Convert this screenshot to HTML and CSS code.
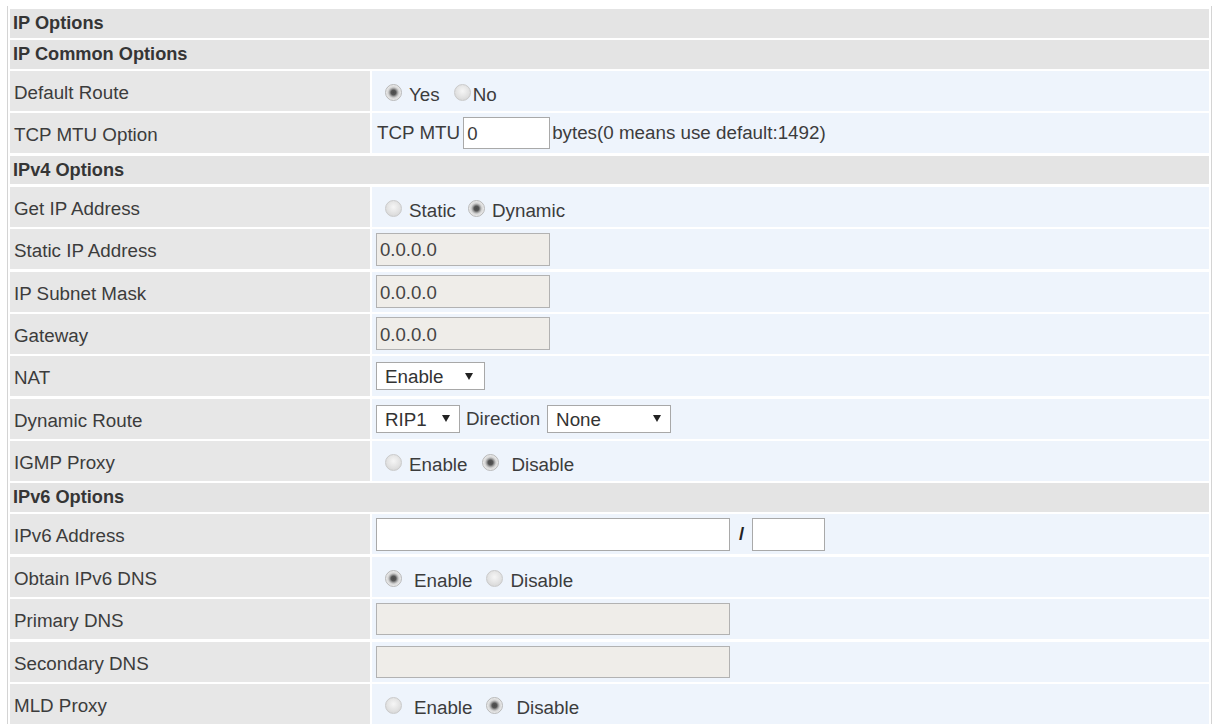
FILE: index.html
```html
<!DOCTYPE html>
<html>
<head>
<meta charset="utf-8">
<title>IP Options</title>
<link rel="stylesheet" href="styles.css">
</head>
<body>
<div class="panel">
  <div class="hdr">IP Options</div>
  <div class="hdr">IP Common Options</div>
  <div class="row">
    <div class="lbl">Default Route</div>
    <div class="val radios">
      <input type="radio" class="rd first" name="dr" checked><span class="t">Yes</span>
      <input type="radio" class="rd second" name="dr"><span class="t tight">No</span>
    </div>
  </div>
  <div class="row">
    <div class="lbl">TCP MTU Option</div>
    <div class="val">
      <span class="txt">TCP MTU</span><input type="text" class="inp mtu" value="0"><span class="txt after">bytes(0 means use default:1492)</span>
    </div>
  </div>
  <div class="hdr">IPv4 Options</div>
  <div class="row">
    <div class="lbl">Get IP Address</div>
    <div class="val radios">
      <input type="radio" class="rd first" name="gip"><span class="t">Static</span>
      <input type="radio" class="rd second narrow" name="gip" checked><span class="t">Dynamic</span>
    </div>
  </div>
  <div class="row">
    <div class="lbl">Static IP Address</div>
    <div class="val"><input type="text" class="inp dis ip" value="0.0.0.0" disabled></div>
  </div>
  <div class="row">
    <div class="lbl">IP Subnet Mask</div>
    <div class="val"><input type="text" class="inp dis ip" value="0.0.0.0" disabled></div>
  </div>
  <div class="row">
    <div class="lbl">Gateway</div>
    <div class="val"><input type="text" class="inp dis ip" value="0.0.0.0" disabled></div>
  </div>
  <div class="row">
    <div class="lbl">NAT</div>
    <div class="val">
      <span class="sel nat"><span>Enable</span><svg class="arr" viewBox="0 0 8 7"><polygon points="0,0 8,0 4,7"/></svg></span>
    </div>
  </div>
  <div class="row">
    <div class="lbl">Dynamic Route</div>
    <div class="val">
      <span class="sel rip"><span>RIP1</span><svg class="arr" viewBox="0 0 8 7"><polygon points="0,0 8,0 4,7"/></svg></span><span class="txt dir">Direction</span><span class="sel none"><span>None</span><svg class="arr" viewBox="0 0 8 7"><polygon points="0,0 8,0 4,7"/></svg></span>
    </div>
  </div>
  <div class="row">
    <div class="lbl">IGMP Proxy</div>
    <div class="val radios">
      <input type="radio" class="rd first" name="igmp"><span class="t">Enable</span>
      <input type="radio" class="rd second wide2" name="igmp" checked><span class="t wide">Disable</span>
    </div>
  </div>
  <div class="hdr">IPv6 Options</div>
  <div class="row">
    <div class="lbl">IPv6 Address</div>
    <div class="val">
      <input type="text" class="inp v6"><span class="slash">/</span><input type="text" class="inp pre">
    </div>
  </div>
  <div class="row">
    <div class="lbl">Obtain IPv6 DNS</div>
    <div class="val radios">
      <input type="radio" class="rd first" name="odns" checked><span class="t wide">Enable</span>
      <input type="radio" class="rd second" name="odns"><span class="t">Disable</span>
    </div>
  </div>
  <div class="row">
    <div class="lbl">Primary DNS</div>
    <div class="val"><input type="text" class="inp dis v6 short" disabled></div>
  </div>
  <div class="row">
    <div class="lbl">Secondary DNS</div>
    <div class="val"><input type="text" class="inp dis v6 short" disabled></div>
  </div>
  <div class="row">
    <div class="lbl">MLD Proxy</div>
    <div class="val radios">
      <input type="radio" class="rd first" name="mld"><span class="t wide">Enable</span>
      <input type="radio" class="rd second" name="mld" checked><span class="t wider">Disable</span>
    </div>
  </div>
</div>
</body>
</html>
```
FILE: styles.css
```css
html, body {
  margin: 0;
  padding: 0;
  background: #ffffff;
}
body {
  font-family: "Liberation Sans", Arial, sans-serif;
  font-size: 18.8px;
  color: #3c3c3c;
}
.panel {
  display: flex;
  flex-direction: column;
  gap: 2.4px;
  width: 1205px;
  margin: 6px 0 0 7px;
  padding: 3px 2px 0;
  border-left: 1px solid #d4d4d4;
  border-right: 1px solid #d4d4d4;
  box-sizing: border-box;
}
.hdr {
  height: 28.6px;
  background: #e4e4e4;
  font-weight: bold;
  font-size: 18.2px;
  padding-left: 3px;
  display: flex;
  align-items: center;
  color: #353535;
}
.row {
  display: grid;
  grid-template-columns: 360px 1fr;
  column-gap: 2px;
  height: 40px;
}
.lbl {
  background: #e7e7e7;
  padding: 4px 0 0 4px;
  display: flex;
  align-items: center;
}
.val {
  background: #eef4fc;
  display: flex;
  align-items: center;
  padding-left: 4px;
}
.val.radios {
  padding-top: 8px;
  box-sizing: border-box;
}
.rd {
  -webkit-appearance: none;
  appearance: none;
  width: 17px;
  height: 17px;
  margin: 0 0 5px 0;
  border-radius: 50%;
  border: 1px solid #cacaca;
  background: radial-gradient(circle at 50% 40%, #f6f6f6 0, #e2e2e2 55%, #cfcfcf 100%);
  box-sizing: border-box;
  flex: none;
}
.rd:checked {
  border-color: #b8b8b8;
  background: radial-gradient(circle at 50% 50%, #4a4a4a 0, #555 2.4px, #9a9a9a 3.8px, #d4d4d4 5.4px, #ececec 7.5px);
}
.rd.first { margin-left: 9px; }
.rd.second { margin-left: 14px; }
.rd.second.narrow { margin-left: 12px; }
.rd.second.wide2 { margin-left: 15px; }
.t { margin-left: 7px; }
.t.tight { margin-left: 2px; }
.t.wide { margin-left: 12px; }
.t.wider { margin-left: 13px; }
.txt { margin-left: 1px; }
.txt.after { margin-left: 2px; }
.inp {
  font-family: "Liberation Sans", Arial, sans-serif;
  font-size: 18.6px;
  color: #3a3a3a;
  height: 32px;
  border: 1px solid #a9a9a9;
  background: #ffffff;
  box-sizing: border-box;
  padding: 2px 3px 0;
  margin: 0;
  outline: none;
}
.inp.mtu {
  width: 87px;
  margin-left: 3px;
}
.inp.dis {
  background: #efede9;
  border-color: #b2b2b2;
  color: #444;
}
.inp.ip {
  width: 174px;
  height: 33px;
}
.inp.v6 {
  width: 354px;
  height: 33px;
}
.inp.v6.short { height: 32px; }
.inp.pre {
  width: 73px;
  height: 33px;
}
.slash {
  font-weight: bold;
  margin: 0 8px 0 9px;
  color: #222;
}
.sel {
  display: inline-flex;
  align-items: center;
  justify-content: space-between;
  height: 28px;
  border: 1px solid #a8a8a8;
  background: #ffffff;
  box-sizing: border-box;
  padding: 2px 11px 0 8px;
  color: #333;
}
.sel.nat { width: 109px; }
.sel.rip { width: 84px; padding-right: 9px; }
.sel.none { width: 124px; padding-right: 9px; }
.arr {
  width: 8px;
  height: 7px;
  fill: #222;
  margin-bottom: 2px;
}
.dir {
  margin: 0 7px 0 6px;
}
```
